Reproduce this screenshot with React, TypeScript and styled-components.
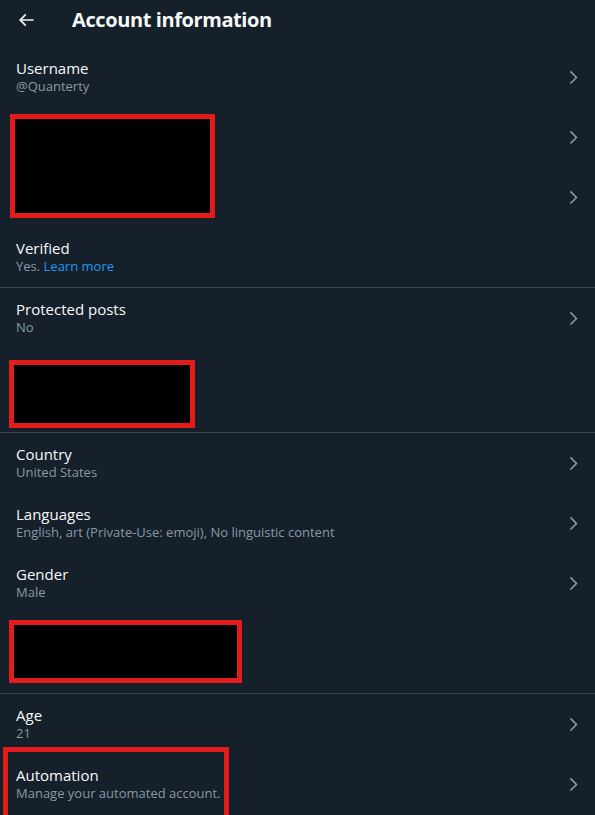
import React from "react";
import styled, { createGlobalStyle } from "styled-components";

const GlobalStyle = createGlobalStyle`
  html, body { margin: 0; padding: 0; background: #15202b; }
  body { font-family: "Open Sans", "Noto Sans", "Liberation Sans", sans-serif; -webkit-font-smoothing: antialiased; }
  * { box-sizing: border-box; }
`;

const Page = styled.div`
  width: 595px;
  height: 815px;
  overflow: hidden;
  background: #15202b;
  display: flex;
  flex-direction: column;
  position: relative;
`;

const Header = styled.div`
  height: 47px;
  padding: 0 16px 7px 16px;
  display: flex;
  align-items: center;
  gap: 36px;
`;

const BackButton = styled.div`
  width: 20px;
  height: 20px;
  display: flex;
  color: #eff3f4;
`;

const Title = styled.h1`
  margin: 0;
  font-size: 20px;
  line-height: 24px;
  font-weight: 700;
  letter-spacing: -0.4px;
  color: #f7f9f9;
`;

const Section = styled.div`
  position: relative;
  display: flex;
  flex-direction: column;
`;

const Divider = styled.div`
  height: 1px;
  background: #38444d;
`;

const RowBox = styled.div<{ $h?: number }>`
  height: ${(p) => p.$h ?? 60}px;
  padding: 11px 12px 13px 16px;
  display: flex;
  align-items: center;
  justify-content: space-between;
`;

const RowText = styled.div`
  display: flex;
  flex-direction: column;
`;

const RowTitle = styled.div`
  font-size: 15px;
  line-height: 20px;
  color: #f7f9f9;
  font-weight: 500;
`;

const RowSub = styled.div`
  font-size: 13px;
  line-height: 16px;
  color: #8b98a5;
`;

const Link = styled.span`
  color: #1d9bf0;
`;

const Chevron = styled.svg`
  width: 18.75px;
  height: 18.75px;
  fill: #8b98a5;
  flex: none;
  margin-top: 2px;
`;

const Redaction = styled.div<{ $x: number; $y: number; $w: number; $h: number; $fill?: boolean }>`
  position: absolute;
  left: ${(p) => p.$x}px;
  top: ${(p) => p.$y}px;
  width: ${(p) => p.$w}px;
  height: ${(p) => p.$h}px;
  border: 5px solid #e21b1b;
  background: ${(p) => (p.$fill ? "#000" : "transparent")};
`;

const ChevronIcon = () => (
  <Chevron viewBox="0 0 24 24">
    <path d="M14.586 12L7.543 4.96l1.414-1.42L17.414 12l-8.457 8.46-1.414-1.42L14.586 12z" />
  </Chevron>
);

type RowProps = { title?: React.ReactNode; sub?: React.ReactNode; chevron?: boolean; h?: number };

const Row = ({ title, sub, chevron = true, h }: RowProps) => (
  <RowBox $h={h}>
    <RowText>
      {title && <RowTitle>{title}</RowTitle>}
      {sub && <RowSub>{sub}</RowSub>}
    </RowText>
    {chevron && <ChevronIcon />}
  </RowBox>
);

export default function App() {
  return (
    <>
      <GlobalStyle />
      <Page>
        <Header>
          <BackButton>
            <svg viewBox="0 0 24 24" width="20" height="20" fill="currentColor">
              <path d="M7.414 13l5.043 5.04-1.414 1.42L3.586 12l7.457-7.46 1.414 1.42L7.414 11H21v2H7.414z" />
            </svg>
          </BackButton>
          <Title>Account information</Title>
        </Header>
        <Section>
          <Row title="Username" sub="@Quanterty" />
          <Row />
          <Row />
          <Redaction $x={10} $y={67} $w={205} $h={104} $fill />
          <Row
            title="Verified"
            sub={
              <>
                Yes. <Link>Learn more</Link>
              </>
            }
            chevron={false}
          />
        </Section>
        <Divider />
        <Section>
          <Row title="Protected posts" sub="No" />
          <RowBox $h={84} />
          <Redaction $x={9} $y={72} $w={186} $h={68} $fill />
        </Section>
        <Divider />
        <Section>
          <Row title="Country" sub="United States" />
          <Row title="Languages" sub="English, art (Private-Use: emoji), No linguistic content" />
          <Row title="Gender" sub="Male" />
          <RowBox $h={80} />
          <Redaction $x={9} $y={187} $w={233} $h={63} $fill />
        </Section>
        <Divider />
        <Section>
          <Row title="Age" sub="21" />
          <Row title="Automation" sub="Manage your automated account." />
          <Redaction $x={3} $y={53} $w={226} $h={80} />
        </Section>
      </Page>
    </>
  );
}
